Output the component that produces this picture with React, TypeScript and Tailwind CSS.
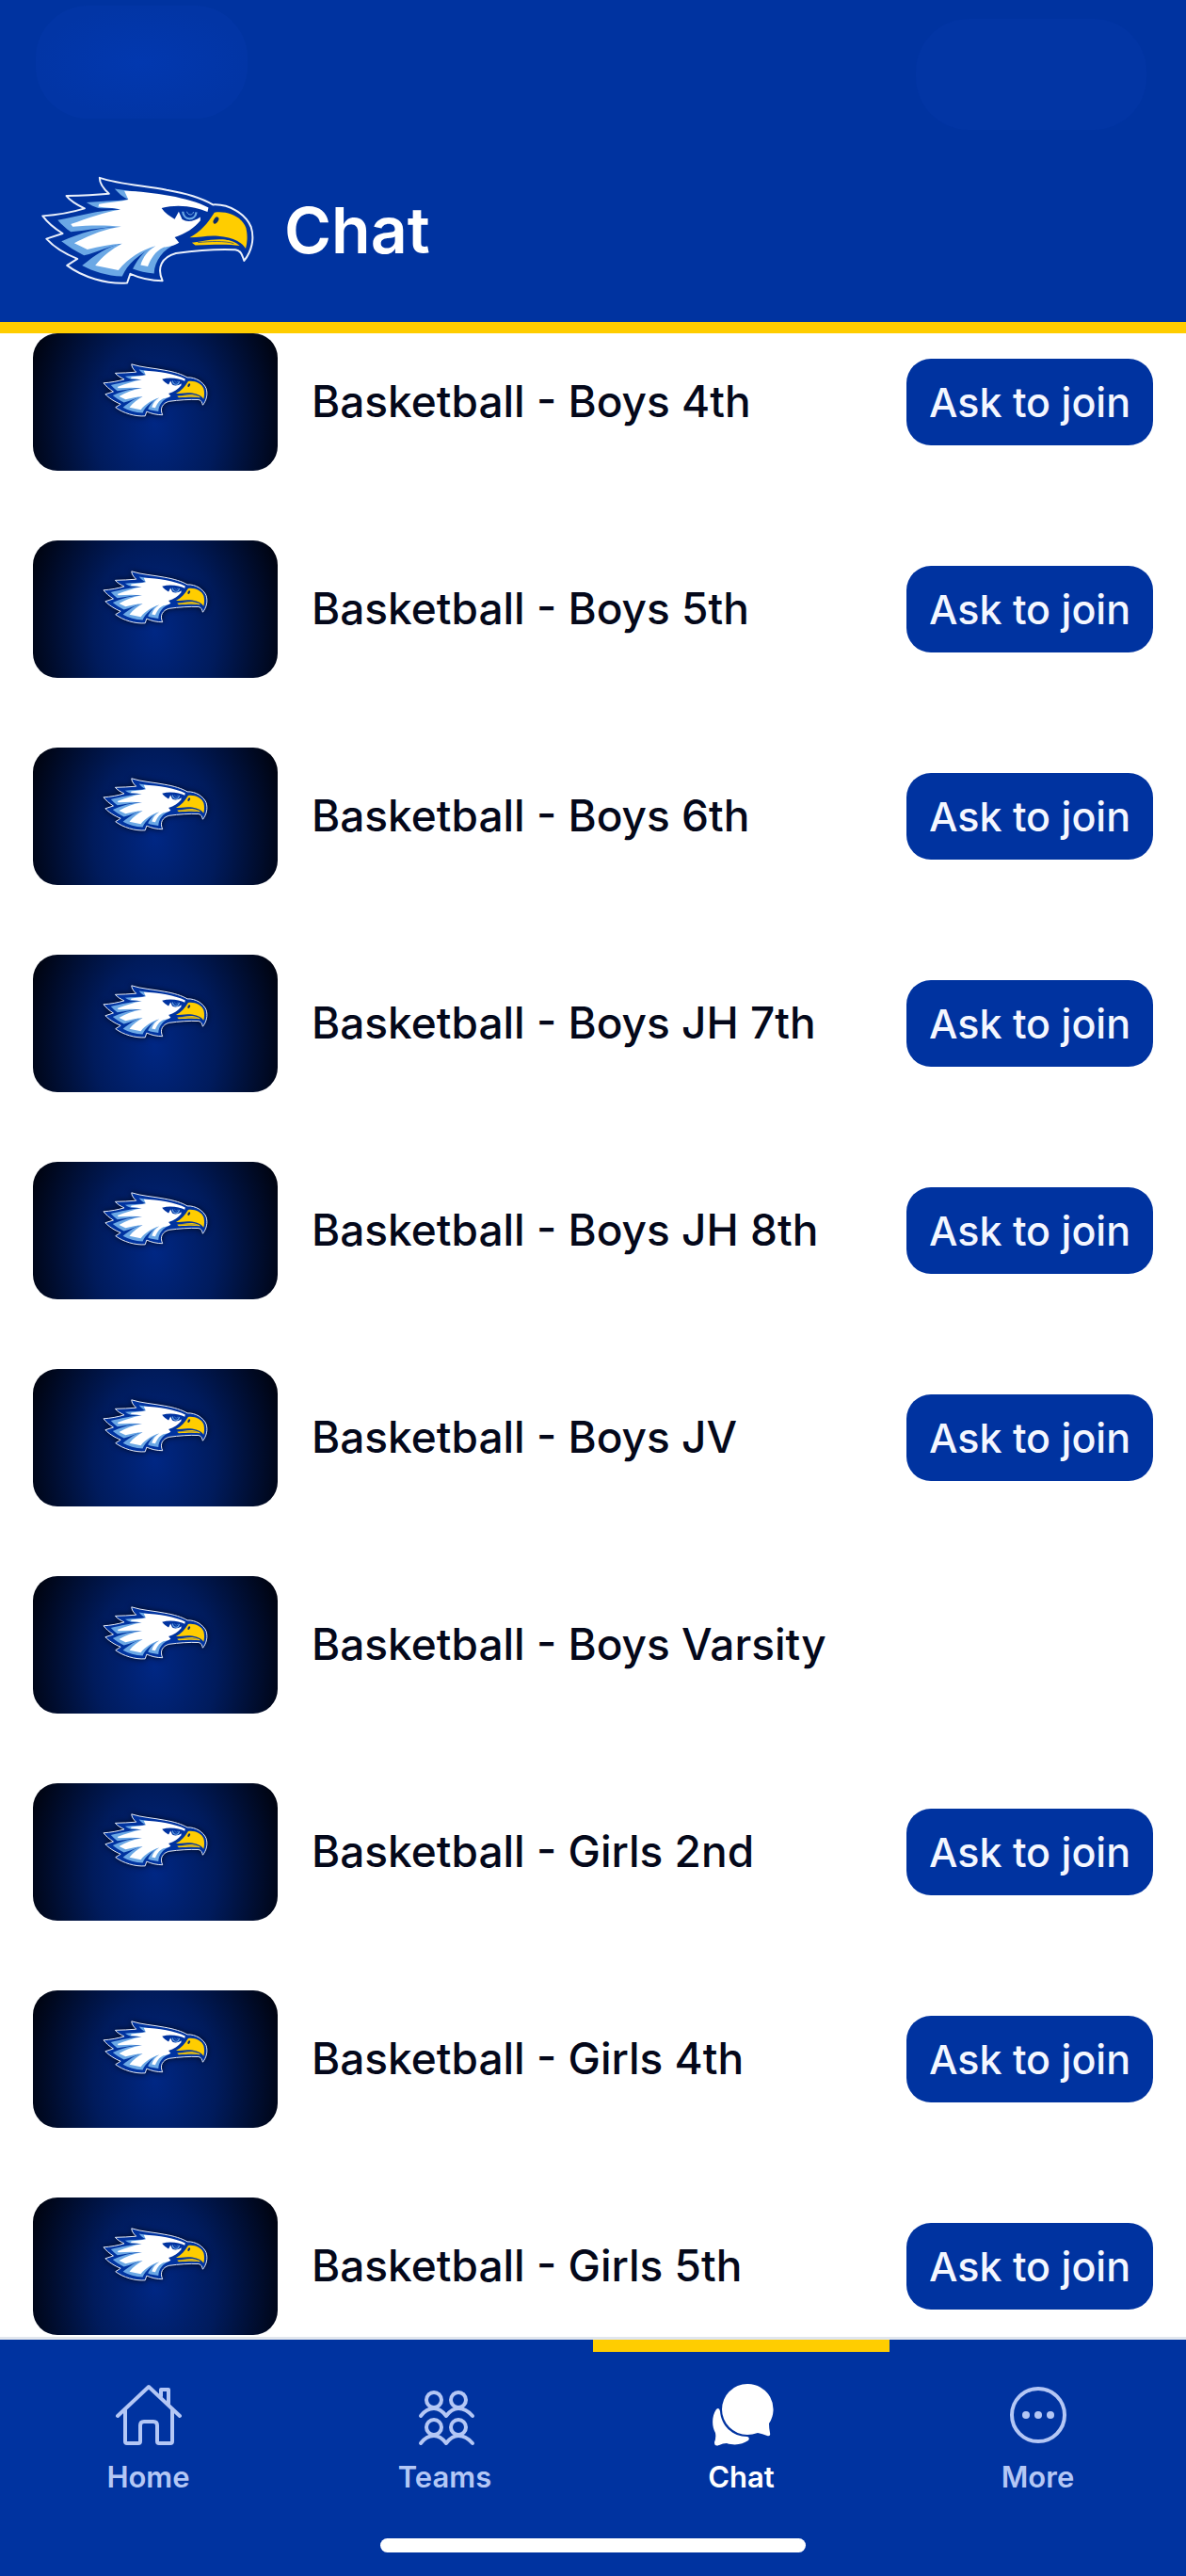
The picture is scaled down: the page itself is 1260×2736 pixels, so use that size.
import React from 'react';
import clsx from 'clsx';

const chats = [
  { name: 'Basketball - Boys 4th', canJoin: true },
  { name: 'Basketball - Boys 5th', canJoin: true },
  { name: 'Basketball - Boys 6th', canJoin: true },
  { name: 'Basketball - Boys JH 7th', canJoin: true },
  { name: 'Basketball - Boys JH 8th', canJoin: true },
  { name: 'Basketball - Boys JV', canJoin: true },
  { name: 'Basketball - Boys Varsity', canJoin: false },
  { name: 'Basketball - Girls 2nd', canJoin: true },
  { name: 'Basketball - Girls 4th', canJoin: true },
  { name: 'Basketball - Girls 5th', canJoin: true },
];

const tabs = [
  { label: 'Home', icon: HomeIcon },
  { label: 'Teams', icon: TeamsIcon },
  { label: 'Chat', icon: ChatIcon, active: true },
  { label: 'More', icon: MoreIcon },
];

function EagleLogo({ className }: { className?: string }) {
  return (
    <svg viewBox="40 50 680 348" className={className} aria-hidden="true">
      {/* outline */}
      <path
        d="M226 55C290 76 370 80 440 94C500 104 552 120 588 141C640 138 692 170 710 212C722 250 712 290 688 320C682 304 680 288 660 285C600 282 530 288 470 296C425 308 408 342 427 384C390 384 355 376 324 362L314 391C250 396 170 372 122 335L155 314C115 298 76 272 56 250L108 233C84 218 58 196 44 177C90 174 136 166 178 153C155 142 132 128 120 113C166 112 212 110 256 106C238 90 226 72 226 55Z"
        fill="#0033a0"
        stroke="#eaf0fb"
        strokeWidth="6"
        strokeLinejoin="round"
      />
      {/* feather shading */}
      <g fill="#6ba8e5">
        <path d="M274 90L345 100L350 140L316 124C300 116 286 104 274 90Z" />
        <path d="M184 134C230 130 275 130 318 125L360 150L295 156C270 150 245 154 222 152C208 148 196 142 184 134Z" />
        <path d="M92 190C155 178 220 158 295 156L360 180L295 211C240 212 190 222 134 228C118 216 104 204 92 190Z" />
        <path d="M104 258C160 232 230 212 295 211L350 240L298 265C255 274 220 292 176 303C150 290 125 275 104 258Z" />
        <path d="M170 335C210 304 250 272 298 265L360 250L405 273C350 300 316 330 298 370C250 368 206 354 170 335Z" />
        <path d="M332 346C350 310 375 280 405 273L470 266C430 284 402 318 400 361C375 359 352 354 332 346Z" />
      </g>
      {/* head */}
      <path
        d="M305 97C400 100 510 118 574 150L571 164C540 150 480 136 424 152C435 168 450 178 466 187L479 163L490 188C508 198 528 194 548 180L548 192C530 215 500 235 466 245L480 262C462 274 445 274 432 277C402 290 390 315 380 338L357 334C365 308 380 288 405 273C360 285 318 312 286 350L212 335C235 305 266 282 298 265C260 266 225 275 187 284L145 264C190 240 240 218 295 211C240 205 190 207 140 211L134 203C190 183 240 165 293 156C268 150 244 151 222 147L224 139C255 133 290 132 318 125Z"
        fill="#fff"
      />
      {/* eye */}
      <path d="M487 160L545 164L545 180C530 192 500 192 490 182Z" fill="#0033a0" />
      <path d="M492 163C494 192 532 194 535 165" fill="none" stroke="#6ba8e5" strokeWidth="7" />
      <path d="M505 163C508 176 524 176 526 164" fill="none" stroke="#6ba8e5" strokeWidth="3" />
      {/* beak */}
      <path
        d="M593 166C636 160 682 180 694 215C700 240 698 262 693 281C676 256 645 244 605 241C572 238 545 246 514 246C550 226 572 200 593 166Z"
        fill="#ffcd00"
      />
      <path d="M521 262C555 258 585 250 620 252C645 254 662 262 674 272C635 266 590 268 532 271Z" fill="#ffcd00" />
      <path d="M540 262C580 258 625 256 655 265" fill="none" stroke="#0033a0" strokeWidth="2" />
      <ellipse cx="598" cy="191" rx="7" ry="12" transform="rotate(32 598 191)" fill="#0a2a6b" />
    </svg>
  );
}

function HomeIcon() {
  return (
    <svg viewBox="0 0 72 72" fill="none" stroke="currentColor" strokeWidth="4" strokeLinecap="round" strokeLinejoin="round" className="size-[72px]">
      <path d="M3 37L36 6L69 37" />
      <path d="M11 30V64Q11 66 13 66H25Q27 66 27 64V47Q27 43 31 43H41Q45 43 45 47V64Q45 66 47 66H59Q61 66 61 64V30" />
      <path d="M49 16V9H57V24" />
    </svg>
  );
}

function TeamsIcon() {
  return (
    <svg viewBox="0 0 72 72" fill="none" stroke="currentColor" strokeWidth="4" strokeLinecap="round" strokeLinejoin="round" className="size-[72px]">
      <circle cx="24" cy="20" r="8" />
      <circle cx="50" cy="20" r="8" />
      <path d="M10 37Q16 29 24 29Q31 29 37 37Q43 29 50 29Q58 29 65 37" />
      <circle cx="24" cy="49" r="8" />
      <circle cx="50" cy="49" r="8" />
      <path d="M10 66Q16 58 24 58Q31 58 37 66Q43 58 50 58Q58 58 65 66" />
    </svg>
  );
}

function ChatIcon() {
  return (
    <svg viewBox="0 0 72 72" fill="currentColor" className="size-[72px]">
      <path d="M42 3A27 27 0 1 0 42 57Q47 57 53 55Q58 56 63 58Q67 59 66 55Q65 50 65 45A27 27 0 0 0 42 3Z" />
      <path d="M9 30Q12 27 13 32C14 47 26 59 42 59Q45 60 43 63C37 67 29 69 20 66Q16 66 12 68Q7 70 7 65Q9 60 8 55C4 48 4 37 9 30Z" />
    </svg>
  );
}

function MoreIcon() {
  return (
    <svg viewBox="0 0 72 72" fill="currentColor" className="size-[72px]">
      <circle cx="36" cy="36" r="28" fill="none" stroke="currentColor" strokeWidth="4" />
      <circle cx="23" cy="36" r="4" />
      <circle cx="36" cy="36" r="4" />
      <circle cx="49" cy="36" r="4" />
    </svg>
  );
}

function ChatRow({ name, canJoin }: { name: string; canJoin: boolean }) {
  return (
    <li className="flex items-center">
      <div className="flex h-[146px] w-[260px] shrink-0 justify-center rounded-[26px] bg-[radial-gradient(ellipse_56%_140%_at_50%_66%,#002784_0%,#001b5c_45%,#00020b_100%)] pt-8">
        <EagleLogo className="h-[57px] w-[112px] drop-shadow-[0_0_3px_#000820]" />
      </div>
      <span className="ml-9 flex-1 pb-0.5 text-[46px] leading-[56px] font-medium text-[#04081a]">
        {name}
      </span>
      {canJoin && (
        <button
          type="button"
          className="h-[92px] w-[262px] shrink-0 rounded-[26px] bg-[#0033a0] text-[43px] leading-[56px] font-medium text-[#f4f7ff]"
        >
          Ask to join
        </button>
      )}
    </li>
  );
}

export default function App() {
  return (
    <div className="flex min-h-screen flex-col bg-white font-['Inter',sans-serif]">
      <header className="border-b-12 border-[#ffcd00] bg-[#0033a0]">
        <div className="flex h-[147px] items-start justify-between pt-1.5 pr-[42px] pl-[38px]">
          <span className="h-[120px] w-[225px] rounded-[56px] bg-[radial-gradient(ellipse_at_center,#0238af_0%,#0235a5_70%)]" />
          <span className="mt-3.5 h-[118px] w-[245px] rounded-[56px] bg-[#0235a4]" />
        </div>
        <div className="flex h-[195px] items-center gap-8 px-11">
          <EagleLogo className="h-[116px] w-[226px]" />
          <h1 className="pb-0.5 text-[68px] leading-[80px] font-semibold text-white">Chat</h1>
        </div>
      </header>

      <main className="flex-1">
        <ul className="flex flex-col gap-[74px] px-[35px] pb-0.5">
          {chats.map((chat) => (
            <ChatRow key={chat.name} {...chat} />
          ))}
        </ul>
      </main>

      <nav className="border-t-3 border-[#e1e6ee] bg-[#0033a0] pb-[25px]">
        <div className="grid grid-cols-4">
          {tabs.map(({ label, icon: Icon, active }) => (
            <a
              key={label}
              href="#"
              aria-current={active ? 'page' : undefined}
              className={clsx(
                'flex flex-col items-center gap-2.5 border-t-13 pt-[31px] text-[31px] leading-10 font-semibold',
                active ? 'border-[#ffcd00] text-white' : 'border-transparent text-[#b4c7f5]'
              )}
            >
              <Icon />
              {label}
            </a>
          ))}
        </div>
        <div className="mx-auto mt-[45px] h-[15px] w-[452px] rounded-full bg-white" />
      </nav>
    </div>
  );
}
